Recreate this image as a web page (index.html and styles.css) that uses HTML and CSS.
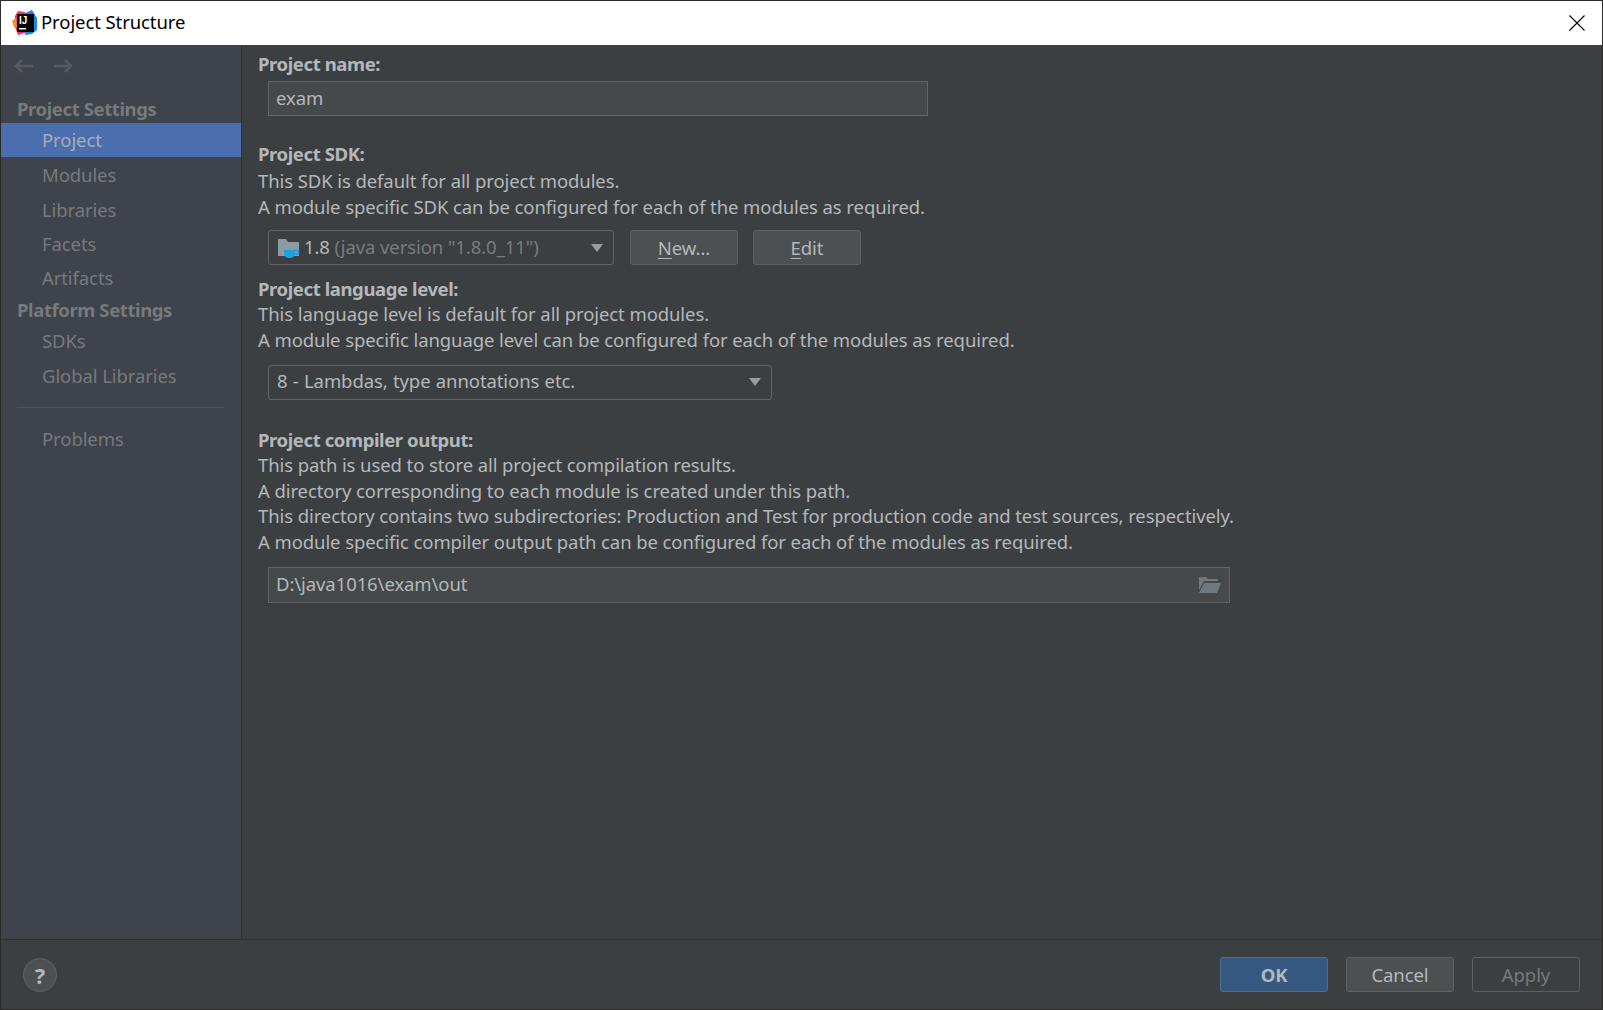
FILE: index.html
```html
<!DOCTYPE html>
<html lang="en">
<head>
<meta charset="utf-8">
<title>Project Structure</title>
<link rel="stylesheet" href="styles.css">
</head>
<body>
<div class="window">
  <header class="titlebar">
    <svg class="app-icon" width="26" height="26" viewBox="0 0 26 26">
      <path d="M3 6 6 1 13 2 13 23 6 25 3 17Z" fill="#f0346f"/>
      <path d="M0 11 4 8 5 17 2 17Z" fill="#f78c2a"/>
      <path d="M13 3 20 0 25 8 25 20 20 24 13 25Z" fill="#1b88f0"/>
      <rect x="5" y="4" width="17" height="18" fill="#000"/>
      <text x="7" y="13.500" class="app-icon-text">IJ</text>
      <rect x="7" y="18" width="7" height="1.500" fill="#fff"/>
    </svg>
    <span class="title">Project Structure</span>
    <svg class="close" width="16" height="16" viewBox="0 0 16 16"><path d="M.5.5 15.500 15.500M15.500.5 .5 15.500" stroke="#000" stroke-width="1.100" fill="none"/></svg>
  </header>
  <div class="body">
    <nav class="sidebar">
      <div class="history">
        <svg width="20" height="14" viewBox="0 0 20 14"><path d="M19 7H2M8 1 2 7l6 6" fill="none" stroke="#565a5d" stroke-width="2.600"/></svg>
        <svg width="20" height="14" viewBox="0 0 20 14"><path d="M1 7h17M12 1l6 6-6 6" fill="none" stroke="#565a5d" stroke-width="2.600"/></svg>
      </div>
      <div class="nav-head first">Project Settings</div>
      <div class="nav-item selected">Project</div>
      <div class="nav-item">Modules</div>
      <div class="nav-item">Libraries</div>
      <div class="nav-item">Facets</div>
      <div class="nav-item">Artifacts</div>
      <div class="nav-head">Platform Settings</div>
      <div class="nav-item">SDKs</div>
      <div class="nav-item">Global Libraries</div>
      <div class="nav-sep"></div>
      <div class="nav-item">Problems</div>
    </nav>
    <main class="content">
      <div class="label">Project name:</div>
      <div class="field name-field">exam</div>

      <div class="label sdk-label">Project SDK:</div>
      <div class="line sdk-first">This SDK is default for all project modules.</div>
      <div class="line">A module specific SDK can be configured for each of the modules as required.</div>
      <div class="sdk-row">
        <div class="combo sdk-combo">
          <svg class="sdk-icon" width="24" height="22" viewBox="0 0 24 22">
            <path d="M1 2h8l2 3h11v14H1Z" fill="#8c9aa3"/>
            <path d="M7 13h11v3c0 3-2 5-5 5h-1c-3 0-5-2-5-5Z" fill="#1f9fe0"/>
            <path d="M18 13.500h3.500v3.500H17" fill="none" stroke="#1f9fe0" stroke-width="1.500"/>
          </svg>
          <span class="combo-text">1.8 <span class="muted">(java version "1.8.0_11")</span></span>
          <span class="caret"></span>
        </div>
        <div class="btn sdk-btn"><span><u>N</u>ew...</span></div>
        <div class="btn sdk-btn"><span><u>E</u>dit</span></div>
      </div>

      <div class="label lang-label">Project language level:</div>
      <div class="line">This language level is default for all project modules.</div>
      <div class="line">A module specific language level can be configured for each of the modules as required.</div>
      <div class="combo lang-combo">
        <span class="combo-text lang-text">8 - Lambdas, type annotations etc.</span>
        <span class="caret"></span>
      </div>

      <div class="label out-label">Project compiler output:</div>
      <div class="line">This path is used to store all project compilation results.</div>
      <div class="line">A directory corresponding to each module is created under this path.</div>
      <div class="line">This directory contains two subdirectories: Production and Test for production code and test sources, respectively.</div>
      <div class="line">A module specific compiler output path can be configured for each of the modules as required.</div>
      <div class="field out-field">
        <span>D:\java1016\exam\out</span>
        <svg class="out-icon" width="24" height="18" viewBox="0 0 24 18"><path d="M1 1h7l2 2h10v2H6L1 14Z" fill="#6e7a80"/><path d="M6 7h17l-4 10H1Z" fill="#6e7a80"/></svg>
      </div>
    </main>
  </div>
  <footer class="footer">
    <div class="help">?</div>
    <div class="actions">
      <div class="btn foot-btn ok">OK</div>
      <div class="btn foot-btn">Cancel</div>
      <div class="btn foot-btn disabled">Apply</div>
    </div>
  </footer>
</div>
</body>
</html>
```
FILE: styles.css
```css
* { box-sizing: border-box; }
html, body { margin: 0; height: 100%; }
body {
  background: #2b2b2b;
  font-family: "Noto Sans", "Open Sans", sans-serif;
  font-size: 18.500px;
  letter-spacing: -0.090px;
  color: #b4b8bb;
  overflow: hidden;
}
.window {
  height: 1010px;
  padding: 1px;
  display: flex;
  flex-direction: column;
}
.titlebar {
  height: 44px;
  flex: none;
  background: #fff;
  color: #000;
  display: flex;
  align-items: center;
  padding: 0 17px 0 11px;
}
.app-icon { flex: none; }
.app-icon-text { font-family: "Liberation Sans", sans-serif; font-size: 10px; font-weight: 700; fill: #fff; }
.title { margin-left: 3px; flex: 1; padding-bottom: 4px; }
.close { flex: none; }
.body { flex: 1; display: flex; min-height: 0; background: #3c3f41; }
.sidebar {
  width: 241px;
  flex: none;
  background: #3f434b;
  border-right: 1px solid #303234;
  padding-top: 12px;
}
.history { display: flex; gap: 19px; padding-left: 13px; height: 18px; align-items: center; }
.nav-head {
  height: 29px;
  line-height: 31px;
  padding-left: 16px;
  font-weight: 700;
  letter-spacing: -0.400px;
  color: #777a7d;
}
.nav-head.first { margin-top: 19px; height: 29px; line-height: 29px; }
.nav-item {
  height: 34.300px;
  line-height: 35px;
  padding-left: 41px;
  color: #777a7d;
}
.nav-item.selected { background: #4b6eaf; color: #a9adb3; line-height: 34px; }
.nav-sep { height: 1px; background: #4e5157; margin: 15px 16px 13px; }
.content { flex: 1; padding: 6px 0 0 16px; min-width: 0; }
.label { font-weight: 700; line-height: 25px; letter-spacing: -0.400px; }
.line { line-height: 25.700px; white-space: nowrap; }
.field, .combo {
  height: 35px;
  margin-left: 10px;
  border: 1px solid #646464;
  display: flex;
  align-items: center;
  padding-bottom: 3px;
}
.field { background: #45494a; padding-left: 7px; padding-right: 7px; }
.name-field { width: 660px; margin-top: 5px; }
.out-field { width: 962px; height: 36px; margin-top: 12px; justify-content: space-between; }
.out-icon { flex: none; margin-top: 3px; }
.sdk-label { margin-top: 25px; }
.sdk-first { margin-top: 2px; }
.sdk-row { display: flex; align-items: center; margin-top: 11px; }
.combo { border-radius: 3px; padding-left: 8px; padding-right: 10px; background: #3c3f41; }
.sdk-combo { width: 346px; }
.sdk-icon { flex: none; margin-right: 3px; margin-top: 3px; }
.combo-text { flex: 1; white-space: nowrap; }
.lang-text { word-spacing: 0.600px; }
.muted { color: #787b7e; }
.caret { width: 0; height: 0; margin-top: 3px; border-left: 6.500px solid transparent; border-right: 6.500px solid transparent; border-top: 8px solid #9a9da0; }
.btn {
  height: 35px;
  display: flex;
  align-items: center;
  justify-content: center;
  border: 1px solid #5e6060;
  border-radius: 3px;
  background: #4c5052;
  padding-bottom: 1px;
}
.btn u { text-underline-offset: 3px; }
.sdk-btn { width: 108px; margin-left: 16px; }
.sdk-btn:nth-child(3) { margin-left: 15px; }
.lang-label { margin-top: 11px; }
.lang-combo { width: 504px; margin-top: 12px; }
.out-label { margin-top: 27px; }
.footer {
  height: 70px;
  flex: none;
  background: #3c3f41;
  border-top: 1px solid #303234;
  display: flex;
  align-items: center;
  justify-content: space-between;
  padding: 0 22px;
}
.help {
  width: 34px;
  height: 34px;
  border-radius: 50%;
  background: #4c5052;
  border: 1px solid #5e6060;
  display: flex;
  align-items: center;
  justify-content: center;
  font-weight: 700;
  font-size: 22px;
}
.actions { display: flex; gap: 18px; }
.foot-btn { width: 108px; }
.ok { background: #365880; border-color: #4c708c; font-weight: 700; }
.disabled { background: #3c3f41; color: #777a7d; }
```
